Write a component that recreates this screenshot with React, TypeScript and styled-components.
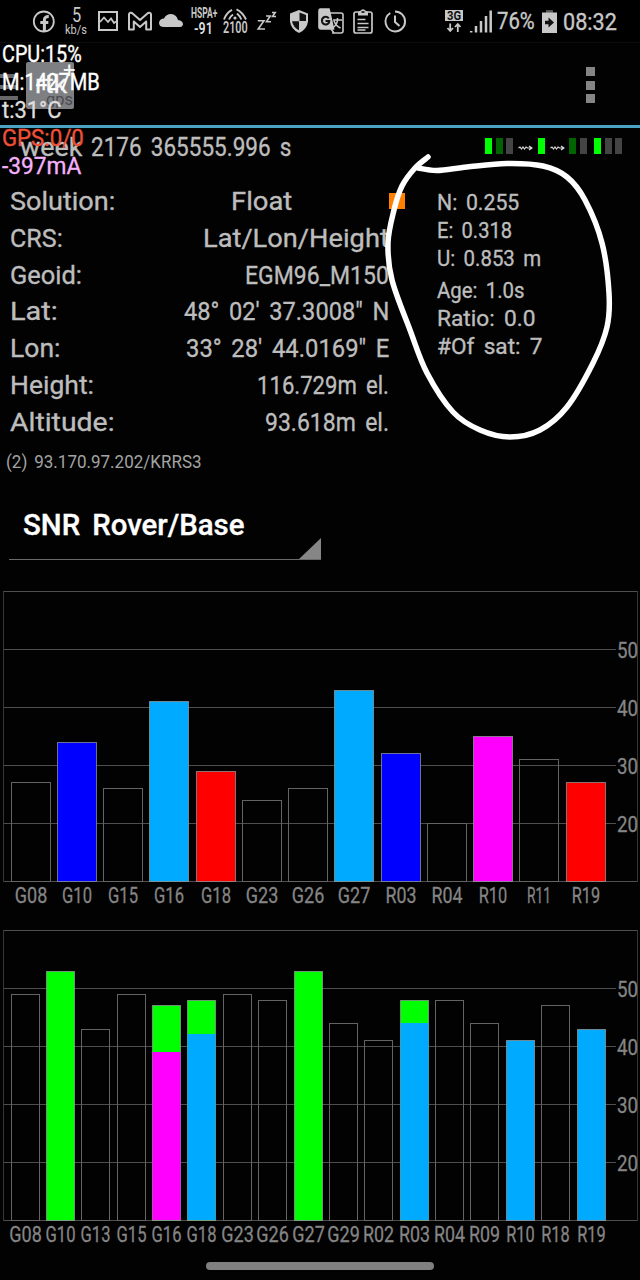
import React, { useLayoutEffect, useRef, useState } from "react";
import styled, { createGlobalStyle } from "styled-components";

const FONT = `Roboto, "Open Sans", sans-serif`;

const GlobalStyle = createGlobalStyle`
  html, body { margin: 0; background: #020202; }
  body { font-family: ${FONT}; color: #bdbdbd; }
`;

const Screen = styled.main`
  position: relative;
  width: 640px;
  height: 1280px;
  display: flex;
  flex-direction: column;
  overflow: hidden;
  background: #020202;
`;

/* Text squeezed or stretched horizontally to a fixed width */
const FitBox = styled.span<{ $w: number; $size: number; $lh: number; $weight: number; $color: string }>`
  display: block;
  flex: none;
  width: ${(p) => p.$w}px;
  height: ${(p) => p.$lh}px;
  line-height: ${(p) => p.$lh}px;
  font-size: ${(p) => p.$size}px;
  font-weight: ${(p) => p.$weight};
  color: ${(p) => p.$color};
  white-space: pre;
  word-spacing: 0.16em;
  -webkit-text-stroke: ${(p) => (p.$size > 20 ? 0.35 : 0)}px ${(p) => p.$color};
`;
const FitInner = styled.span`
  display: inline-block;
  transform-origin: 0 50%;
`;

type FitProps = { children: string; w: number; size: number; lh: number; weight?: number; color?: string };
function Fit({ children, w, size, lh, weight = 400, color = "#bdbdbd" }: FitProps) {
  const ref = useRef<HTMLSpanElement>(null);
  const [scale, setScale] = useState(1);
  useLayoutEffect(() => {
    if (ref.current) setScale(w / ref.current.offsetWidth);
  }, [w, children]);
  return (
    <FitBox $w={w} $size={size} $lh={lh} $weight={weight} $color={color}>
      <FitInner ref={ref} style={{ transform: `scaleX(${scale})` }}>{children}</FitInner>
    </FitBox>
  );
}

/* ---------- status bar ---------- */
const StatusBar = styled.header`
  flex: none;
  box-sizing: border-box;
  height: 43px;
  display: flex;
  align-items: flex-start;
  background: #000;
  border-bottom: 1px solid #0c0c0c;
`;
const StatusItem = styled.div<{ $gap: number; $w: number; $top?: number }>`
  flex: none;
  width: ${(p) => p.$w}px;
  margin-left: ${(p) => p.$gap}px;
  padding-top: ${(p) => p.$top ?? 8}px;
  display: flex;
  flex-direction: column;
  align-items: center;
  svg { display: block; flex: none; overflow: visible; }
`;
const G = "#c8c8c8";

function Status() {
  return (
    <StatusBar>
      <StatusItem $gap={32} $w={24}>
        <svg width="24" height="28" fill="none" stroke={G}>
          <circle cx="11.8" cy="13.5" r="10" strokeWidth="1.8" />
          <path d="M12.4 23V12q0-3.6 4.4-3.4M8.3 14.6h8" strokeWidth="3" />
        </svg>
      </StatusItem>
      <StatusItem $gap={9} $w={22} $top={7}>
        <Fit w={9} size={20} lh={17} color={G}>5</Fit>
        <Fit w={22} size={12} lh={13} color={G}>kb/s</Fit>
      </StatusItem>
      <StatusItem $gap={11} $w={20}>
        <svg width="20" height="28" fill="none" stroke={G} strokeWidth="2">
          <rect x="1" y="4" width="18" height="18" />
          <path d="M2 14l4-4.500 4 4.500 3-3.500 3 4.500 2-1.500" strokeWidth="1.8" />
        </svg>
      </StatusItem>
      <StatusItem $gap={9} $w={26}>
        <svg width="26" height="28" fill="none" stroke={G} strokeWidth="2" strokeLinejoin="round">
          <path d="M2 21.5V6.2Q3 4 5 5l8 7 8-7q2.500-.8 3 1.200V21.500h-4.800V13.500L13 19 6.800 13.500v8z" />
        </svg>
      </StatusItem>
      <StatusItem $gap={6} $w={25}>
        <svg width="25" height="28" fill={G}>
          <path d="M5 19Q0 19 0 14.500q1-4 5-4Q7 6 12 6q5.500.5 7 6 5 .5 5 4.500-.5 2.500-3 2.500z" />
        </svg>
      </StatusItem>
      <StatusItem $gap={6} $w={27} $top={6}>
        <Fit w={26} size={14} lh={15} weight={700} color={G}>HSPA+</Fit>
        <Fit w={19} size={17} lh={14} weight={600} color="#dedede">-91</Fit>
      </StatusItem>
      <StatusItem $gap={5} $w={26}>
        <svg width="26" height="13" fill="none" stroke={G} strokeWidth="1.9">
          <path d="M2 11.500Q4.500 4.500 10 1.800M7 11.500Q8.300 8.300 11 6.500M14.500 1.300Q20.500 4 24 11.500M15 5.500Q17.800 7.800 19.300 11.500" />
          <circle cx="13" cy="10" r="1.600" fill={G} stroke="none" />
        </svg>
        <Fit w={25} size={16} lh={14} weight={600} color={G}>2100</Fit>
      </StatusItem>
      <StatusItem $gap={9} $w={20}>
        <svg width="20" height="28" fill="none" stroke={G} strokeWidth="1.600">
          <path d="M.8 12.800h6.200L1.200 21h6.800M9 8h4.200L9.500 13.800h4.500M15 4.500h3.200l-2.700 4h3.500" />
        </svg>
      </StatusItem>
      <StatusItem $gap={12} $w={20}>
        <svg width="20" height="28">
          <path d="M10 2l9 3.500v8q-1 8-9 11.500-8-3.500-9-11.500v-8z" fill={G} />
          <path d="M10.500 4.500l6.500 2.500v6H10.500zM10 13.300v9q-5.800-3-7-9z" fill="#111" />
        </svg>
      </StatusItem>
      <StatusItem $gap={9} $w={26}>
        <svg width="26" height="28" fill="none" stroke={G} strokeWidth="1.600">
          <path d="M9 5h14q2 0 2 2v16q0 2-2 2h-9" />
          <path d="M2 1h9l4.500 20H3q-2 0-2-2V3q0-2 1-2z" fill={G} />
          <path d="M10.800 10.300Q9 8 6.300 9 3.500 10.300 4 13.500q1 3.500 4.500 3 2.800-.8 2.800-3.500H7.500" stroke="#111" strokeWidth="2" />
          <path d="M15 12h9M19.500 10v2q-.5 5-5 8M16 13q2 5 6.500 7M13 21l3 4" />
        </svg>
      </StatusItem>
      <StatusItem $gap={9} $w={20}>
        <svg width="20" height="28" fill="none" stroke={G} strokeWidth="1.700">
          <rect x="1" y="4" width="18" height="21" rx="2" />
          <path d="M5 4l2-1q3-3.500 6 0l2 1v3.500H5z" fill={G} stroke="none" />
          <path d="M8.500 4h3" stroke="#111" />
          <path d="M4.500 11.500h8M4.500 15.500h11M4.500 19.500h11M4.500 22h8" strokeWidth="1.300" />
        </svg>
      </StatusItem>
      <StatusItem $gap={11} $w={23}>
        <svg width="23" height="28" fill="none" stroke={G} strokeWidth="2">
          <path d="M6.300 5A10 10 0 0 0 11 23.500 10 10 0 0 0 11 3.400M11 7.500v6.500l4.500 4" />
        </svg>
      </StatusItem>
      <StatusItem $gap={38} $w={18} $top={10}>
        <NetBadge><Fit w={14} size={12} lh={12} weight={700} color="#111">3G</Fit></NetBadge>
        <svg width="18" height="12" fill="none" stroke={G} strokeWidth="1.800">
          <path d="M5.200 2.500v7M2.500 7l2.700 3L8 7M12.800 11V4M10 6l2.800-3L15.500 6" />
        </svg>
      </StatusItem>
      <StatusItem $gap={7} $w={22}>
        <svg width="22" height="28" stroke={G} strokeWidth="2.500">
          <path d="M1.200 24.500V23M6 24.500v-6.500M11 24.500V13M16 24.500V8M20.700 24.500V2.500" />
        </svg>
      </StatusItem>
      <StatusItem $gap={5} $w={37} $top={7}>
        <Fit w={38} size={23} lh={30} color={G}>76%</Fit>
      </StatusItem>
      <StatusItem $gap={8} $w={15}>
        <svg width="15" height="28">
          <path d="M4 2h7v4H4z" fill="#555" />
          <path d="M0 4.500h15V25H0z" fill={G} />
          <path d="M3 12.800h3.500v-3.300l5.500 5-5.500 5v-3.300H3z" fill="#111" />
        </svg>
      </StatusItem>
      <StatusItem $gap={6} $w={54} $top={7}>
        <Fit w={54} size={24} lh={30} color={G}>08:32</Fit>
      </StatusItem>
    </StatusBar>
  );
}
const NetBadge = styled.div`
  width: 18px;
  height: 11px;
  display: flex;
  justify-content: center;
  background: ${G};
`;

/* ---------- action bar ---------- */
const ActionBar = styled.div`
  flex: none;
  box-sizing: border-box;
  height: 85px;
  display: flex;
  align-items: flex-start;
  border-bottom: 3px solid #4ba3c3;
`;
const Hamburger = styled.div`
  width: 18px;
  height: 26px;
  margin-top: 31px;
  display: flex;
  flex-direction: column;
  justify-content: space-between;
`;
const HamburgerLine = styled.i`
  height: 4px;
  background: #68686a;
`;
const AppLogo = styled.div`
  box-sizing: border-box;
  width: 48px;
  height: 47px;
  margin: 19px 0 0 8px;
  padding: 11px 0 0 9px;
  border-radius: 2px;
  background: #7e7f83;
`;
const LogoName = styled.div`
  display: flex;
  height: 22px;
`;
const LogoPlus = styled.span`
  margin: -13px 0 0 -4px;
  font-size: 22px;
  line-height: 22px;
  color: #f4f4f4;
`;
const LogoSub = styled.div`
  margin: -3px 0 0 11px;
`;
const Overflow = styled.div`
  margin: 24px 45px 0 auto;
  display: flex;
  flex-direction: column;
  gap: 4.5px;
`;
const Dot = styled.i`
  width: 9px;
  height: 9px;
  background: #858585;
`;

/* ---------- solution panel ---------- */
const WeekRow = styled.div`
  flex: none;
  height: 54px;
  padding-left: 20px;
  display: flex;
  align-items: flex-start;
`;
const Leds = styled.div`
  margin: 10px 18px 0 auto;
  display: flex;
  align-items: center;
`;
const Led = styled.i<{ $c: string; $gap?: number }>`
  width: 7px;
  height: 16px;
  margin-left: ${(p) => p.$gap ?? 3.5}px;
  background: ${(p) => p.$c};
`;
const LedArrow = styled.svg`
  display: block;
  width: 15px;
  height: 8px;
  margin: 3px 0 0 5px;
`;
const Arrow = () => (
  <LedArrow viewBox="0 0 15 8" fill="none" stroke="#ddd" strokeWidth="1.1">
    <path d="M.5 4l1.500-1 1.500 2 1.500-2 1.500 2L8 3l1.500 1H14M11 2L14 4l-3 2" />
  </LedArrow>
);

const Panel = styled.section`
  flex: none;
  height: 266px;
  display: flex;
`;
const Solution = styled.div`
  width: 379px;
  padding-left: 10px;
`;
const Row = styled.div<{ $inset?: number }>`
  height: 36.75px;
  padding-right: ${(p) => p.$inset ?? 0}px;
  box-sizing: border-box;
  display: flex;
  justify-content: space-between;
`;
const Quality = styled.i`
  width: 16px;
  height: 16px;
  margin-top: 11px;
  background: #ff8000;
`;
const Accuracy = styled.div`
  margin: 7px 0 0 32px;
  display: flex;
  flex-direction: column;
  gap: 4px;
`;

const rows: [string, number, string, number, number?][] = [
  ["Solution:", 105, "Float", 61, 97],
  ["CRS:", 53, "Lat/Lon/Height", 186],
  ["Geoid:", 72, "EGM96_M150", 144],
  ["Lat:", 48, `48° 02' 37.3008" N`, 205],
  ["Lon:", 50, `33° 28' 44.0169" E`, 203],
  ["Height:", 84, "116.729m el.", 132],
  ["Altitude:", 105, "93.618m el.", 124],
];
const accuracy: [string, number][][] = [
  [["N: 0.255", 82], ["E: 0.318", 75], ["U: 0.853 m", 104]],
  [["Age: 1.0s", 88], ["Ratio: 0.0", 98], ["#Of sat: 7", 106]],
];

const Mount = styled.div`
  flex: none;
  height: 50px;
  padding: 0 0 0 6px;
`;
const Spinner = styled.div`
  flex: none;
  box-sizing: border-box;
  position: relative;
  width: 312px;
  height: 62px;
  margin: 0 0 0 9px;
  padding: 8px 0 0 14px;
  border-bottom: 1px solid #6a6a6a;
  &::after {
    content: "";
    position: absolute;
    right: 0;
    bottom: 0;
    border: solid transparent;
    border-width: 0 0 21px 22px;
    border-bottom-color: #868686;
  }
`;

/* ---------- charts ---------- */
type Bar = { id: string; v: number; c?: string; inner?: [number, string] };
const BLUE = "#0000ff", SKY = "#00aaff", RED = "#ff0000", PINK = "#ff00ff", GREEN = "#00ff00";
const rover: Bar[] = [
  { id: "G08", v: 27 }, { id: "G10", v: 34, c: BLUE }, { id: "G15", v: 26 }, { id: "G16", v: 41, c: SKY },
  { id: "G18", v: 29, c: RED }, { id: "G23", v: 24 }, { id: "G26", v: 26 }, { id: "G27", v: 43, c: SKY },
  { id: "R03", v: 32, c: BLUE }, { id: "R04", v: 20 }, { id: "R10", v: 35, c: PINK }, { id: "R11", v: 31 },
  { id: "R19", v: 27, c: RED },
];
const base: Bar[] = [
  { id: "G08", v: 49 }, { id: "G10", v: 53, c: GREEN }, { id: "G13", v: 43 }, { id: "G15", v: 49 },
  { id: "G16", v: 47, c: GREEN, inner: [39, PINK] }, { id: "G18", v: 48, c: GREEN, inner: [42, SKY] },
  { id: "G23", v: 49 }, { id: "G26", v: 48 }, { id: "G27", v: 53, c: GREEN }, { id: "G29", v: 44 },
  { id: "R02", v: 41 }, { id: "R03", v: 48, c: GREEN, inner: [44, SKY] }, { id: "R04", v: 48 },
  { id: "R09", v: 44 }, { id: "R10", v: 41, c: SKY }, { id: "R18", v: 47 }, { id: "R19", v: 43, c: SKY },
];
const ChartSvg = styled.svg`
  flex: none;
  display: block;
  margin-top: 31px;
  & + & { margin-top: 17px; }
  text { font-family: ${FONT}; font-size: 22px; fill: #858585; stroke: #858585; stroke-width: 0.3px; }
`;
const labelWidth = (id: string) =>
  id === "R11" ? 24 : (id[0] === "G" ? 32.5 : 31) - (id.includes("1") ? 2.5 : 0);

function Chart({ bars, pitch, barWidth }: { bars: Bar[]; pitch: number; barWidth: number }) {
  const y = (v: number) => Math.round(290 - (v - 10) * 5.8);
  return (
    <ChartSvg width="640" height="322">
      <g fill="none" stroke="#4e4e4e">
        <path d="M3.5 290.5V.5H637.5V290.5" stroke="#363636" />
        <path d="M3.5 .5H637.5M3.5 290.5H637.5" />
        {[50, 40, 30, 20].map((v) => <path key={v} d={`M3.5 ${y(v) + 0.5}H616`} />)}
      </g>
      {bars.map((b, i) => {
        const x = Math.round(10.6 + i * pitch);
        const cx = x + barWidth / 2;
        const lw = labelWidth(b.id);
        return (
          <g key={b.id}>
            <rect x={x + 0.5} y={y(b.v) + 0.5} width={barWidth - 1} height={290 - y(b.v)}
              fill={b.c ?? "none"} stroke={b.c ? "#9aa0a0" : "#646464"} strokeOpacity={b.c ? 0.7 : 1} />
            {b.inner && <rect x={x + 0.5} y={y(b.inner[0])} width={barWidth - 1} height={290 - y(b.inner[0])} fill={b.inner[1]} />}
            <text x={cx - lw / 2} y="311.5" textLength={lw} lengthAdjust="spacingAndGlyphs">{b.id}</text>
          </g>
        );
      })}
      {[50, 40, 30, 20].map((v) => (
        <text key={v} x="617" y={y(v) + 8.5} textLength="21" lengthAdjust="spacingAndGlyphs">{v}</text>
      ))}
    </ChartSvg>
  );
}

/* ---------- overlays ---------- */
const Monitor = styled.div`
  position: absolute;
  left: 2px;
  top: 41px;
`;
const Ink = styled.svg`
  position: absolute;
  left: 0;
  top: 0;
  pointer-events: none;
`;
const NavPill = styled.div`
  position: absolute;
  left: 206px;
  bottom: 10px;
  width: 228px;
  height: 8px;
  border-radius: 4px;
  background: #808080;
`;

const loop: [number, number][] = [
  [428, 157], [415, 168], [402, 186], [394, 210], [388, 243], [392, 280], [410, 330], [427, 373], [453, 412],
  [480, 430], [510, 437], [540, 430], [567, 407], [593, 363], [607, 327], [609, 293], [602, 243], [585, 200],
  [567, 177], [543, 166], [507, 163.5], [467, 167], [437, 170.5], [418, 168],
];
/* Catmull-Rom spline through the pen samples */
const inkPath = loop.reduce((d, p, i) => {
  if (i === 0) return `M${p[0]} ${p[1]}`;
  const a = loop[Math.max(i - 2, 0)], b = loop[i - 1], n = loop[Math.min(i + 1, loop.length - 1)];
  return `${d}C${b[0] + (p[0] - a[0]) / 6} ${b[1] + (p[1] - a[1]) / 6} ${p[0] - (n[0] - b[0]) / 6} ${p[1] - (n[1] - b[1]) / 6} ${p[0]} ${p[1]}`;
}, "");

export default function App() {
  return (
    <Screen>
      <GlobalStyle />
      <Status />
      <ActionBar>
        <Hamburger><HamburgerLine /><HamburgerLine /><HamburgerLine /></Hamburger>
        <AppLogo>
          <LogoName><Fit w={32} size={26} lh={22} color="#f4f4f4">rtk</Fit><LogoPlus>+</LogoPlus></LogoName>
          <LogoSub><Fit w={27} size={17} lh={15} color="#4c4c50">gps</Fit></LogoSub>
        </AppLogo>
        <Overflow><Dot /><Dot /><Dot /></Overflow>
      </ActionBar>
      <WeekRow>
        <Fit w={62} size={26} lh={38}>week</Fit>
        <WeekRest>
          <Fit w={200} size={26} lh={38}>2176 365555.996 s</Fit>
        </WeekRest>
        <Leds>
          <Led $c={GREEN} /><Led $c="#006400" /><Led $c="#444" />
          <Arrow />
          <Led $c={GREEN} $gap={4.5} />
          <Arrow />
          <Led $c="#006400" $gap={4.5} /><Led $c="#444" />
          <Led $c={GREEN} $gap={7.5} /><Led $c="#444" /><Led $c="#444" />
        </Leds>
      </WeekRow>
      <Panel>
        <Solution>
          {rows.map(([label, lw, value, vw, inset]) => (
            <Row key={label} $inset={inset}>
              <Fit w={lw} size={26.5} lh={37}>{label}</Fit>
              <Fit w={vw} size={26.5} lh={37}>{value}</Fit>
            </Row>
          ))}
        </Solution>
        <Quality />
        <Accuracy>
          {accuracy.map((group, i) => (
            <div key={i}>
              {group.map(([t, w]) => <Fit key={t} w={w} size={22} lh={28}>{t}</Fit>)}
            </div>
          ))}
        </Accuracy>
      </Panel>
      <Mount>
        <Fit w={196} size={19} lh={28} color="#a2a2a2">(2) 93.170.97.202/KRRS3</Fit>
      </Mount>
      <Spinner>
        <Fit w={221} size={29} lh={38} weight={500} color="#fff">SNR Rover/Base</Fit>
      </Spinner>
      <Chart bars={rover} pitch={46.25} barWidth={40} />
      <Chart bars={base} pitch={35.37} barWidth={29} />
      <NavPill />
      <Monitor>
        <Fit w={80} size={23} lh={28} color="#fff">CPU:15%</Fit>
        <Fit w={98} size={23} lh={28} color="#fff">M:1427MB</Fit>
        <Fit w={60} size={23} lh={28} color="#dedede">t:31°C</Fit>
        <Fit w={82} size={23} lh={28} color="#f05038">GPS:0/0</Fit>
        <Fit w={79} size={23} lh={28} color="#f5b0fa">-397mA</Fit>
      </Monitor>
      <Ink width="640" height="480" fill="none" stroke="#fff" strokeWidth="5.5" strokeLinecap="round">
        <path d={inkPath} />
      </Ink>
    </Screen>
  );
}

const WeekRest = styled.div`
  margin-left: 9px;
`;
